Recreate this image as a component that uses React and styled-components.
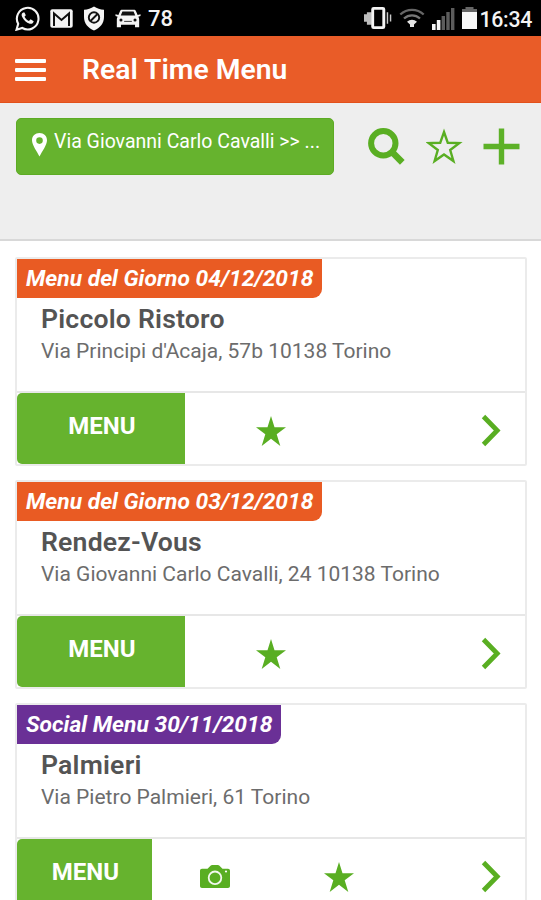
import styled, { createGlobalStyle, css } from "styled-components";

const GlobalStyle = createGlobalStyle`
  * {
    box-sizing: border-box;
  }

  body {
    margin: 0;
    background: #fff;
    font-family: Roboto, sans-serif;
    overflow: hidden;
  }

  svg {
    display: block;
    flex-shrink: 0;
  }
`;

const Screen = styled.div`
  width: 541px;
  height: 900px;
  overflow: hidden;
`;

const StatusBar = styled.div`
  height: 36px;
  background: #000;
  color: #f4f4f4;
  display: flex;
  align-items: center;
  justify-content: space-between;
  padding: 0 9px 0 15px;
`;

const StatusGroup = styled.div`
  display: flex;
  align-items: center;
`;

const LeftIcons = styled(StatusGroup)`
  gap: 10px;
`;

const RightIcons = styled(StatusGroup)`
  gap: 7px;
`;

const Temperature = styled.span`
  font-size: 22px;
  font-weight: 500;
  line-height: 36px;
  margin-left: 7px;
  padding-top: 2px;
`;

const Clock = styled.span`
  font-size: 21.3px;
  font-weight: 500;
  letter-spacing: -0.3px;
  line-height: 36px;
  margin-left: 2px;
  padding-top: 3px;
`;

const Header = styled.header`
  height: 67px;
  background: #e95c28;
  border-bottom: 1px solid #e2501a;
  display: flex;
  align-items: center;
  padding: 0 15px;
  gap: 36px;
`;

const MenuButton = styled.button`
  width: 31px;
  padding: 1px 0 0;
  border: none;
  background: none;
  display: grid;
  gap: 5px;
`;

const Bar = styled.span`
  height: 4px;
  border-radius: 1px;
  background: #fff;
`;

const Title = styled.h1`
  margin: 0;
  padding-top: 1px;
  color: #fff;
  font-size: 28.3px;
  font-weight: 600;
  line-height: 66px;
`;

const Toolbar = styled.section`
  height: 138px;
  background: #eee;
  border-bottom: 2px solid #d8d8d8;
  display: flex;
  align-items: flex-start;
  padding: 15px 21px 0 16px;
`;

const LocationButton = styled.button`
  width: 318px;
  height: 57px;
  border: 1px solid #5dab24;
  border-radius: 5px;
  background: #66b32e;
  color: #fff;
  display: flex;
  align-items: flex-start;
  padding: 12px 0 0 15px;
  gap: 7px;
  font: 400 19.5px/22px Roboto, sans-serif;
  white-space: nowrap;

  svg {
    margin-top: 2px;
  }
`;

const Actions = styled.div`
  flex: 1;
  display: flex;
  align-items: center;
  justify-content: space-between;
  padding: 10px 0 0 34px;
`;

const List = styled.main`
  display: grid;
  gap: 14px;
  padding: 16px 14px 0 15px;
`;

const Card = styled.article`
  height: 209px;
  border: 2px solid #ebebeb;
  border-radius: 2px;
  background: #fff;
`;

const CardBody = styled.div`
  height: 134px;
  border-bottom: 2px solid #e7e7e7;
`;

const Tag = styled.div`
  width: fit-content;
  height: 39px;
  padding: 0 9px;
  border-radius: 0 0 9px 0;
  background: ${(props) => (props.$social ? "#6a3096" : "#e95b23")};
  color: #fff;
  font-size: 22.8px;
  font-style: italic;
  font-weight: 700;
  line-height: 40px;
  white-space: nowrap;
`;

const Name = styled.h2`
  margin: 5px 0 0 24px;
  color: #545454;
  font-size: 26.6px;
  font-weight: 600;
  letter-spacing: 0.2px;
  line-height: 32px;
`;

const Address = styled.p`
  margin: 4px 0 0 24px;
  color: #6c6c6c;
  font-size: 21px;
  font-weight: 400;
  line-height: 24px;
  white-space: nowrap;
`;

const CardFooter = styled.div`
  height: 71px;
  display: grid;
  grid-template-columns: 168px 172px 1fr;

  ${(props) =>
    props.$hasPhoto &&
    css`
      grid-template-columns: 135px 126px 122px 1fr;
    `}
`;

const OpenMenu = styled.button`
  border: none;
  border-radius: 5px 0 0 5px;
  background: #66b32e;
  color: #fff;
  padding: 0 0 6px 2px;
  font: 700 24px/28px Roboto, sans-serif;
`;

const IconCell = styled.div`
  display: flex;
  align-items: center;
  justify-content: ${(props) => (props.$end ? "flex-end" : "center")};
  padding: 4px ${(props) => (props.$end ? "24px" : "0")} 0 0;
`;

function WhatsappIcon() {
  return (
    <svg width="25" height="25" viewBox="0 0 25 25">
      <path
        d="M1.5 23.7 3.2 17.8A10.8 10.8 0 1 1 7.3 22z"
        fill="none"
        stroke="#f4f4f4"
        strokeWidth="2.1"
      />
      <path
        d="M8.2 6.4c-1.7.7-2 2.7-1 4.7 1.6 3.2 4.2 5.7 7.5 6.6 1.9.5 3.7-.6 4-2.5l-3.1-1.9-1.7 1.7c-2-.8-3.5-2.3-4.4-4.2l1.3-1.5-1.3-2.8z"
        fill="#f4f4f4"
      />
    </svg>
  );
}

function MailIcon() {
  return (
    <svg width="23" height="19" viewBox="0 0 23 19">
      <rect x=".3" y=".3" width="22.4" height="18.4" rx="2" fill="#f4f4f4" />
      <path
        d="M4 17V4.5l7.5 6.5L19 4.5V17"
        fill="none"
        stroke="#111"
        strokeWidth="2"
      />
    </svg>
  );
}

function ShieldIcon() {
  return (
    <svg width="22" height="25" viewBox="0 0 22 25">
      <path
        d="M11 .5c3 2.1 6.3 3 10 3.2V11c0 6.5-4 10.8-10 13.5C5 21.8 1 17.5 1 11V3.7C4.7 3.5 8 2.6 11 .5z"
        fill="#f4f4f4"
      />
      <circle cx="11" cy="11.5" r="5.2" fill="none" stroke="#111" strokeWidth="1.9" />
      <path d="m7.5 15 7-7" stroke="#111" strokeWidth="1.9" />
    </svg>
  );
}

function CarIcon() {
  return (
    <svg width="26" height="19" viewBox="0 0 27 19">
      <path
        d="M7.5.5h12c1.2 0 1.8.5 2.3 1.6l1.7 3.7L26.5 5v2l-2.3.7c.7 1 .9 2 .9 3.3v7.5h-4.3V16H6.2v2.5H1.9V11c0-1.3.2-2.3.9-3.3L.5 7V5l3 .8 1.7-3.7C5.7 1 6.3.5 7.5.5z"
        fill="#f4f4f4"
      />
      <path d="M7.7 2.3h11.6l1.7 4.2H6z" fill="#111" />
      <circle cx="6.2" cy="11" r="1.6" fill="#111" />
      <circle cx="20.8" cy="11" r="1.6" fill="#111" />
      <path d="M9.5 12.5h8" stroke="#333" />
    </svg>
  );
}

function VibrateIcon() {
  return (
    <svg width="28" height="24" viewBox="0 0 29 24">
      <path d="M0 8h3V6h5v13H3v-3H0z" fill="#bdbdbd" />
      <rect x="9" y="2" width="11.5" height="20" rx="1" fill="#000" stroke="#f4f4f4" strokeWidth="3" />
      <path d="M24.3 6v12M27.5 8.5v7" stroke="#c8c8c8" strokeWidth="1.5" />
    </svg>
  );
}

function WifiIcon() {
  return (
    <svg width="26" height="20" viewBox="0 0 26 20">
      <g fill="none" strokeWidth="2.3">
        <path d="M1.3 6.5c6.7-6.2 16.7-6.2 23.4 0" stroke="#666" />
        <path d="M5 10.5c4.7-4.2 11.3-4.2 16 0" stroke="#777" />
      </g>
      <path d="M8 13.7c3-2.7 7-2.7 10 0l-3 2.8V19h-4v-2.5z" fill="#e4e4e4" />
    </svg>
  );
}

function SignalIcon() {
  return (
    <svg width="23" height="23" viewBox="0 0 23 23">
      <path d="M0 17h3.6v6H0zM4.8 13h3.6v10H4.8z" fill="#f4f4f4" />
      <path d="M9.6 9H13v14H9.6zM14.3 5h3.4v18h-3.4zM19 1h3.4v22H19z" fill="#5c5c5c" />
    </svg>
  );
}

function BatteryIcon() {
  return (
    <svg width="15" height="22" viewBox="0 0 15 22">
      <path d="M3.5 0h8v2H15v3.5H0V2h3.5z" fill="#666" />
      <path d="M0 5h15v17H0z" fill="#f8f8f8" />
    </svg>
  );
}

function PinIcon() {
  return (
    <svg width="15" height="24" viewBox="0 0 15 24">
      <path
        d="M7.5 0C3.2 0 0 3 0 7.2 0 12 4.8 18 7.5 23.5 10.2 18 15 12 15 7.2 15 3 11.8 0 7.5 0zm0 4.3a3.3 3.3 0 1 1 0 6.6 3.3 3.3 0 0 1 0-6.6z"
        fill="#fff"
        fillRule="evenodd"
      />
    </svg>
  );
}

function SearchIcon() {
  return (
    <svg width="37" height="37" viewBox="0 0 37 37">
      <circle cx="15.3" cy="15.3" r="12.2" fill="none" stroke="#59ae22" strokeWidth="6" />
      <path d="m23.5 23.5 10.8 10.8" stroke="#59ae22" strokeWidth="6.6" />
    </svg>
  );
}

function StarOutlineIcon() {
  return (
    <svg width="37" height="37" viewBox="0 0 37 37">
      <path
        d="M18 4l3.8 10.8 11.4.3-9 6.900 3.200 11L18 26.500l-9.400 6.500 3.200-11-9-6.900 11.400-.3z"
        fill="none"
        stroke="#59ae22"
        strokeWidth="2.4"
      />
    </svg>
  );
}

function PlusIcon() {
  return (
    <svg width="37" height="37" viewBox="0 0 37 37">
      <path d="M18.5.5v36M.5 18.5h36" stroke="#5db128" strokeWidth="5.4" />
    </svg>
  );
}

function StarIcon() {
  return (
    <svg width="30" height="30" viewBox="0 0 30 30">
      <path
        d="m15 0 3.5 11.3H30l-9.3 6.9L24.3 30 15 22.8 5.7 30l3.6-11.8L0 11.3h11.5z"
        fill="#59ae22"
      />
    </svg>
  );
}

function CameraIcon() {
  return (
    <svg width="30" height="23" viewBox="0 0 30 23">
      <path
        d="M2 3.7h5.5l3-2.9c.5-.5 1-.8 1.7-.8h5.6c.7 0 1.2.3 1.700.8l3 2.900H28c1.200 0 2 .8 2 2V21c0 1.200-.8 2-2 2H2c-1.200 0-2-.8-2-2V5.700c0-1.200.8-2 2-2z"
        fill="#59ae22"
      />
      <circle cx="15" cy="12.8" r="6.3" fill="none" stroke="#f2f8ee" strokeWidth="1.8" />
      <circle cx="26" cy="6.5" r="1.1" fill="#fff" />
    </svg>
  );
}

function ChevronIcon() {
  return (
    <svg width="20" height="33" viewBox="0 0 20 33">
      <path d="m2.5 2.5 13.7 14-13.7 14" fill="none" stroke="#59ae22" strokeWidth="4.8" />
    </svg>
  );
}

const restaurants = [
  {
    id: 1,
    tag: "Menu del Giorno 04/12/2018",
    name: "Piccolo Ristoro",
    address: "Via Principi d'Acaja, 57b 10138 Torino",
  },
  {
    id: 2,
    tag: "Menu del Giorno 03/12/2018",
    name: "Rendez-Vous",
    address: "Via Giovanni Carlo Cavalli, 24 10138 Torino",
  },
  {
    id: 3,
    tag: "Social Menu 30/11/2018",
    name: "Palmieri",
    address: "Via Pietro Palmieri, 61 Torino",
    social: true,
  },
];

function RestaurantCard({ restaurant }) {
  const { tag, name, address, social } = restaurant;

  return (
    <Card>
      <CardBody>
        <Tag $social={social}>{tag}</Tag>
        <Name>{name}</Name>
        <Address>{address}</Address>
      </CardBody>
      <CardFooter $hasPhoto={social}>
        <OpenMenu>MENU</OpenMenu>
        {social && (
          <IconCell>
            <CameraIcon />
          </IconCell>
        )}
        <IconCell>
          <StarIcon />
        </IconCell>
        <IconCell $end>
          <ChevronIcon />
        </IconCell>
      </CardFooter>
    </Card>
  );
}

function App() {
  return (
    <>
      <GlobalStyle />
      <Screen>
        <StatusBar>
          <StatusGroup>
            <LeftIcons>
              <WhatsappIcon />
              <MailIcon />
              <ShieldIcon />
              <CarIcon />
            </LeftIcons>
            <Temperature>78</Temperature>
          </StatusGroup>
          <StatusGroup>
            <RightIcons>
              <VibrateIcon />
              <WifiIcon />
              <SignalIcon />
              <BatteryIcon />
            </RightIcons>
            <Clock>16:34</Clock>
          </StatusGroup>
        </StatusBar>
        <Header>
          <MenuButton aria-label="Menu">
            <Bar />
            <Bar />
            <Bar />
          </MenuButton>
          <Title>Real Time Menu</Title>
        </Header>
        <Toolbar>
          <LocationButton>
            <PinIcon />
            <span>Via Giovanni Carlo Cavalli &gt;&gt; ...</span>
          </LocationButton>
          <Actions>
            <SearchIcon />
            <StarOutlineIcon />
            <PlusIcon />
          </Actions>
        </Toolbar>
        <List>
          {restaurants.map((restaurant) => (
            <RestaurantCard key={restaurant.id} restaurant={restaurant} />
          ))}
        </List>
      </Screen>
    </>
  );
}

export default App;
